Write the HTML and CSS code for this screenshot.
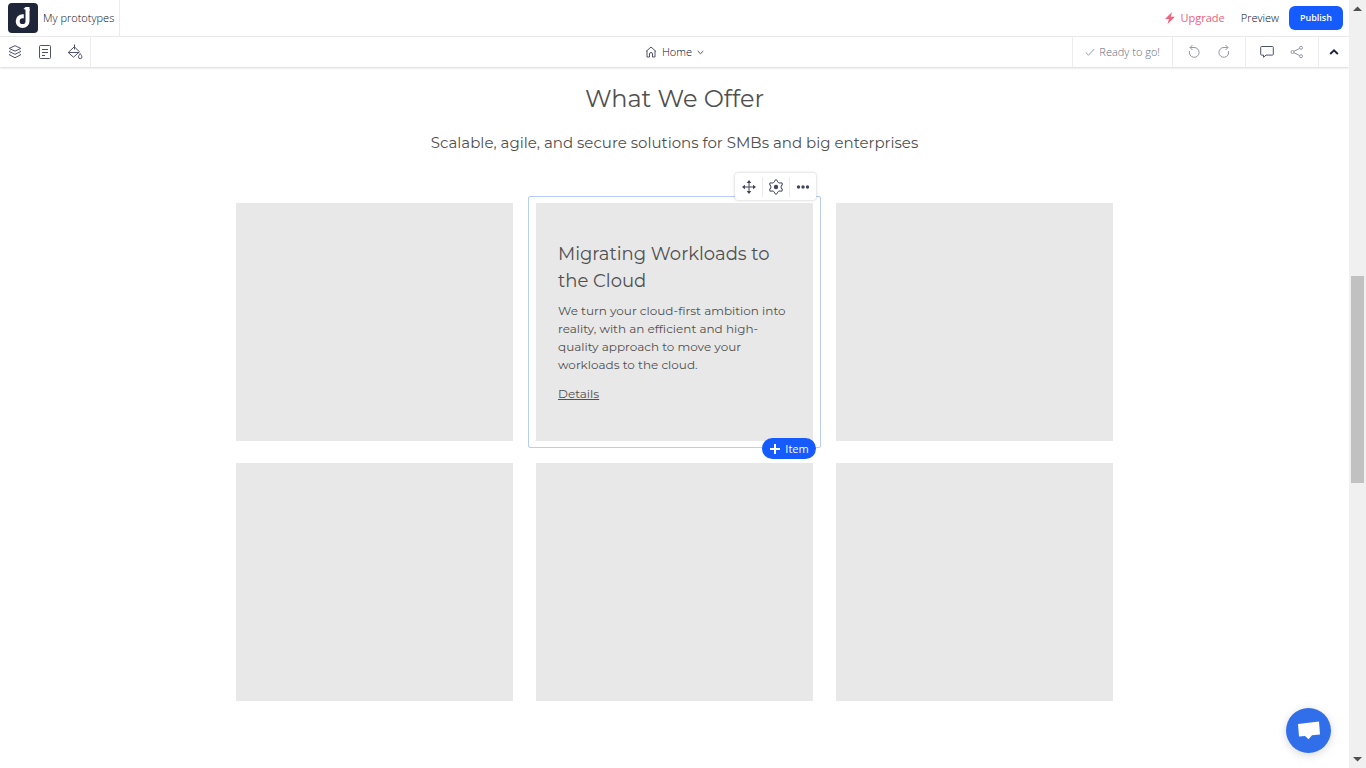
FILE: index.html
```html
<!DOCTYPE html>
<html lang="en">
<head>
<meta charset="utf-8">
<title>My prototypes</title>
<link rel="stylesheet" href="styles.css">
</head>
<body>
<div class="app">
  <div class="workspace">
    <header class="topbar">
      <a class="brand" href="#">
        <svg class="logo" viewBox="0 0 30 30" aria-hidden="true"><rect width="30" height="30" rx="4" fill="#20263a"/><path d="M19.500 6v12.200a4.900 4.900 0 1 1-4.900-4.900h1.200" fill="none" stroke="#fff" stroke-width="4"/><path d="M15.500 6l2-2h4v4z" fill="#fff"/></svg>
        <span>My prototypes</span>
      </a>
      <div class="account">
        <a class="upgrade" href="#"><svg width="10" height="12" viewBox="0 0 10 12" aria-hidden="true"><path d="M7 0L0 7h4L2.500 12 10 4.800H5.800z" fill="#f0647f"/></svg>Upgrade</a>
        <a class="preview" href="#">Preview</a>
        <button class="publish" type="button">Publish</button>
      </div>
    </header>
    <div class="toolbar">
      <div class="tools tools-left">
        <button type="button" aria-label="Layers"><svg viewBox="0 0 16 16"><path d="M8 1.700l5.800 2.700L8 7.100 2.200 4.400zM3.300 6.700l-1.100.8L8 10.300l5.800-2.800-1.100-.8M3.300 9.900l-1.100.8L8 13.800l5.800-3.100-1.100-.8"/></svg></button>
        <button type="button" aria-label="Pages"><svg viewBox="0 0 16 16"><rect x="2.500" y="1.500" width="11" height="13" rx="1"/><path d="M5 5.500h6M5 8.500h6M5 11.500h3"/></svg></button>
        <button type="button" aria-label="Theme"><svg viewBox="0 0 16 16"><path d="M7.500.5v5M7.300 2.800L1.200 8.500l5.300 4.700 6-5.400zM1.500 8.500h10.500"/><path d="M13.200 9.500c-1 1.600-1.700 2.500-1.700 3.500a1.700 1.700 0 0 0 3.400 0c0-1-.7-1.900-1.700-3.500z" fill="#fff"/></svg></button>
      </div>
      <button class="page-picker" type="button"><svg width="12" height="12" viewBox="0 0 12 12"><path d="M1 5.500L6 1l5 4.500M2 4.800V11h2.500V8a1.500 1.500 0 0 1 3 0v3H10V4.800"/></svg><span>Home</span><svg width="7" height="5" viewBox="0 0 7 5"><path d="M.7 1l2.800 2.700L6.300 1"/></svg></button>
      <div class="tools-right">
        <div class="status"><svg width="10" height="10" viewBox="0 0 10 10" aria-hidden="true"><path d="M.8 5.500l2.700 2.700L9.200 2"/></svg>Ready to go!</div>
        <div class="tools muted">
          <button type="button" aria-label="Undo"><svg viewBox="0 0 16 16"><path d="M6.500 1L4 3.500 6.500 6M4.200 3.500H8a4.900 4.900 0 1 1-4.500 3.500"/></svg></button>
          <button type="button" aria-label="Redo"><svg viewBox="0 0 16 16"><path d="M9.500 1L12 3.500 9.500 6M11.800 3.500H8A4.900 4.900 0 1 0 12.500 7"/></svg></button>
        </div>
        <div class="tools">
          <button type="button" aria-label="Comments"><svg viewBox="0 0 16 16"><path d="M2.500 2.500h11a.8.8 0 0 1 .8.8v7a.8.8 0 0 1-.8.8H7l-2.500 2.200v-2.200h-2a.8.8 0 0 1-.8-.8v-7a.8.8 0 0 1 .8-.8z"/></svg></button>
          <button class="share" type="button" aria-label="Share"><svg viewBox="0 0 16 16"><circle cx="3.500" cy="8" r="1.500"/><circle cx="12" cy="3.800" r="1.500"/><circle cx="12" cy="12.200" r="1.500"/><path d="M4.900 7.300l5.700-2.800M4.900 8.700l5.700 2.800"/></svg></button>
        </div>
        <div class="tools">
          <button class="collapse" type="button" aria-label="Collapse"><svg viewBox="0 0 16 16"><path d="M4.200 10L8 6.300l3.800 3.700"/></svg></button>
        </div>
      </div>
    </div>
    <main class="canvas">
      <h1>What We Offer</h1>
      <p class="lead">Scalable, agile, and secure solutions for SMBs and big enterprises</p>
      <div class="offers">
        <article class="card"></article>
        <article class="card selected">
          <h2>Migrating Workloads to the Cloud</h2>
          <p>We turn your cloud-first ambition into reality, with an efficient and high-quality approach to move your workloads to the cloud.</p>
          <a href="#">Details</a>
          <div class="item-tools">
            <button type="button" aria-label="Move"><svg viewBox="0 0 16 16"><path d="M8 2v12M2 8h12"/><path d="M8 1l2.300 3H5.700zM8 15l2.300-3H5.700zM1 8l3-2.300v4.600zM15 8l-3-2.300v4.600z" fill="#3f455b" stroke="none"/></svg></button>
            <button type="button" aria-label="Settings"><svg viewBox="0 0 16 16"><defs><path id="tooth" d="M5.400 3.500C7 3.500 6.200.8 8 .8S9 3.500 10.600 3.500"/></defs><use href="#tooth"/><use href="#tooth" transform="rotate(60 8 8)"/><use href="#tooth" transform="rotate(120 8 8)"/><use href="#tooth" transform="rotate(180 8 8)"/><use href="#tooth" transform="rotate(240 8 8)"/><use href="#tooth" transform="rotate(300 8 8)"/><circle cx="8" cy="8" r="2.200" fill="#3f455b" stroke="none"/></svg></button>
            <button type="button" aria-label="More"><svg viewBox="0 0 16 16"><g fill="#3f455b" stroke="none"><circle cx="3.500" cy="8" r="1.700"/><circle cx="8" cy="8" r="1.700"/><circle cx="12.500" cy="8" r="1.700"/></g></svg></button>
          </div>
          <button class="add-item" type="button"><svg width="12" height="12" viewBox="0 0 12 12" aria-hidden="true"><path d="M6 1v10M1 6h10"/></svg>Item</button>
        </article>
        <article class="card"></article>
        <article class="card"></article>
        <article class="card"></article>
        <article class="card"></article>
      </div>
    </main>
  </div>
  <div class="scroll-track" aria-hidden="true">
    <svg width="9" height="5" viewBox="0 0 9 5"><path d="M0 5l4.500-4.500L9 5z"/></svg>
    <div class="scroll-space"><div class="scroll-thumb"></div></div>
    <svg width="9" height="5" viewBox="0 0 9 5"><path d="M0 0l4.500 4.500L9 0z"/></svg>
  </div>
</div>
<button class="chat" type="button" aria-label="Open chat"><svg width="24" height="22" viewBox="0 0 24 22"><path d="M1 4L22 1.500l1 13-8 .8-3.500 4-3.500-3.300-6 .5z" fill="#fff"/></svg></button>
</body>
</html>
```
FILE: styles.css
```css
* { box-sizing: border-box; }
body { margin: 0; background: #fff; color: #060a1c; font: 300 11px/16px "Open Sans", sans-serif; }
button { padding: 0; border: 0; background: none; color: inherit; font: inherit; cursor: pointer; }
a { color: inherit; text-decoration: none; }
svg { display: block; flex: none; fill: none; stroke: #4c536b; }

.app { display: flex; height: 100vh; overflow: hidden; }
.workspace { flex: 1; min-width: 0; }

.topbar { display: flex; justify-content: space-between; height: 37px; border-bottom: 1px solid #ececee; }
.brand { display: flex; align-items: center; gap: 5px; padding: 0 5px 0 8px; border-right: 1px solid #ececee; }
.logo { width: 30px; height: 30px; stroke: none; }
.account { display: flex; align-items: center; gap: 16px; padding-right: 6px; }
.upgrade { display: flex; align-items: center; gap: 5px; color: #ef6080; font-weight: 400; }
.upgrade svg { stroke: none; }
.publish { width: 54px; height: 24px; margin-left: -6px; border-radius: 6px; background: #155bff; color: #fff; font-size: 9px; font-weight: 600; }

.toolbar { display: grid; grid-template-columns: 1fr auto 1fr; height: 30px; box-shadow: 0 1px 2px rgba(0, 0, 0, .16); }
.tools { display: flex; align-items: center; }
.tools button { display: grid; place-items: center; width: 30px; height: 30px; }
.tools svg { width: 16px; height: 16px; }
.tools-left { justify-self: start; border-right: 1px solid #ececee; }
.page-picker { display: flex; align-items: center; gap: 5px; }
.tools-right { display: flex; justify-content: flex-end; }
.tools-right > div { padding: 0 6px; border-left: 1px solid #ececee; }
.tools-right > div:last-child { padding: 0; }
.tools-right > .status { display: flex; align-items: center; gap: 4px; padding: 0 12px; color: #636a7e; }
.status svg, .muted svg, .tools .share svg { stroke: #9297a5; }
.tools .collapse svg { stroke: #20263a; stroke-width: 2; }

.canvas { padding: 14px 24px 0; color: #505050; font-family: Montserrat, sans-serif; font-weight: 400; text-align: center; }
h1, h2, p { margin: 0; font-weight: 400; }
h1 { font-size: 24px; line-height: 36px; }
.lead { margin: 14px 0 48px; font-size: 15px; line-height: 24px; }
.offers { display: grid; grid-template-columns: repeat(3, 1fr); grid-auto-rows: minmax(238px, auto); gap: 22px 23px; max-width: 877px; margin: 0 auto; text-align: left; }
.card { position: relative; padding: 38px 22px 37px; background: #e8e8e8; }
.selected::before { content: ""; position: absolute; inset: -7px -8px; border: 1px solid #b7ccfb; border-radius: 2px; pointer-events: none; }
.card h2 { font-size: 18px; line-height: 27px; }
.card p { margin: 7px 0 11px; font-size: 12px; line-height: 18px; }
.card a { display: inline-block; font-size: 12px; line-height: 18px; text-decoration: underline; }

.item-tools { position: absolute; top: -30px; right: -3px; display: flex; align-items: center; height: 27px; border-radius: 3px; background: #fff; box-shadow: 0 0 3px rgba(0, 0, 0, .24); }
.item-tools button { display: grid; place-items: center; width: 27px; height: 20px; }
.item-tools button + button { border-left: 1px solid #ececee; }
.item-tools svg { width: 16px; height: 16px; stroke: #3f455b; }
.add-item { position: absolute; right: -3px; bottom: -18px; display: flex; align-items: center; justify-content: center; gap: 4px; width: 54px; height: 21px; border-radius: 11px; background: #155bff; color: #fff; font: 400 11px/16px "Open Sans", sans-serif; }
.add-item svg { stroke: #fff; stroke-width: 2; }

.chat { position: fixed; right: 35px; bottom: 15px; display: grid; place-items: center; width: 45px; height: 45px; border-radius: 50%; background: #316fea; box-shadow: 0 2px 8px rgba(0, 0, 0, .16); }
.chat svg { stroke: none; }

.scroll-track { display: flex; flex-direction: column; align-items: center; width: 17px; padding: 6px 0; background: #f0f0f0; }
.scroll-track svg { fill: #505050; stroke: none; }
.scroll-space { display: grid; grid-template-rows: 265fr 207fr 274fr; flex: 1; width: 13px; }
.scroll-thumb { grid-row: 2; background: #c1c1c1; }
```
